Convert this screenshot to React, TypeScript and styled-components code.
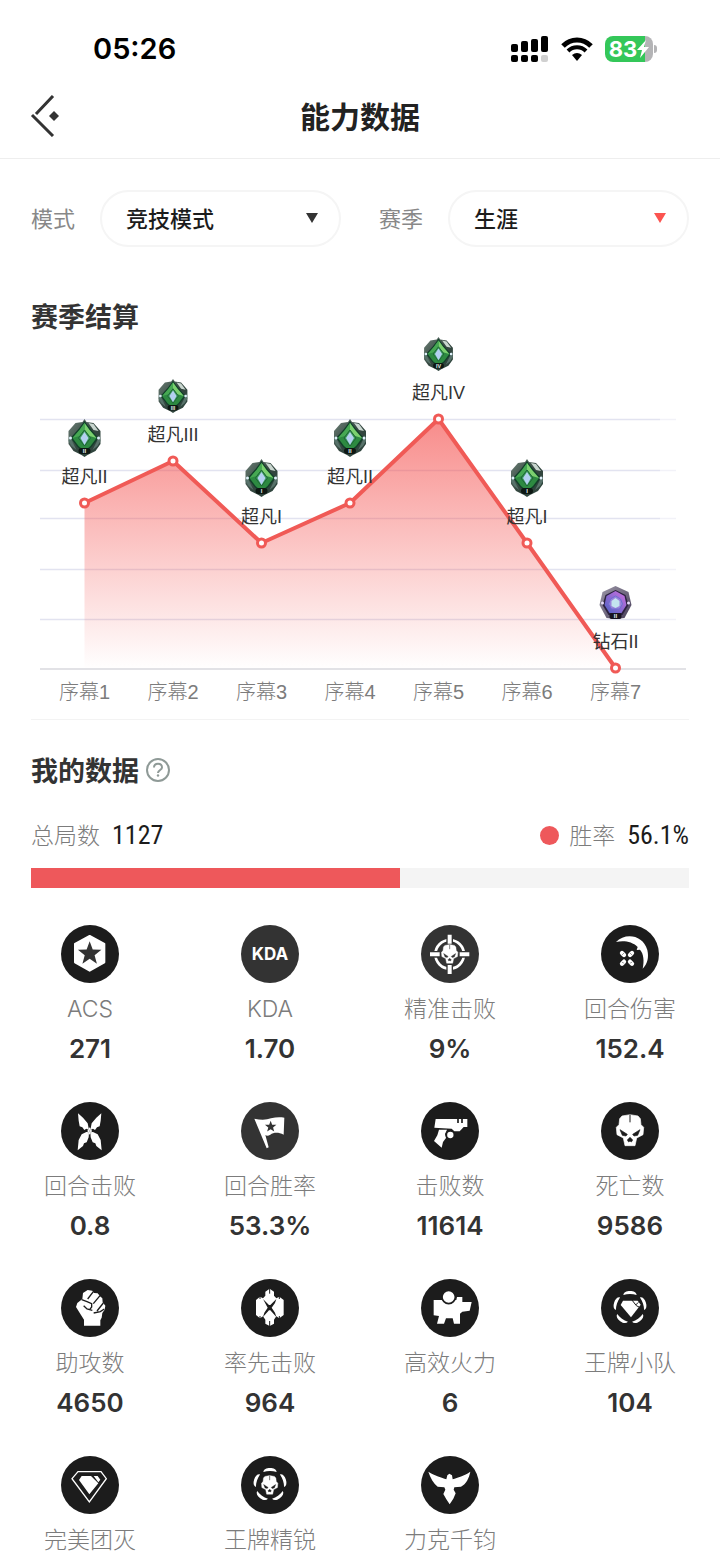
import React from "react";
import styled, { createGlobalStyle } from "styled-components";

const cjk = `"Noto Sans CJK SC", sans-serif`;
const ink = "#333333";
const muted = "#888888";
const mutedLight = "#7c7c7c";
const accent = "#ee585b";

const GlobalStyle = createGlobalStyle`
  * { box-sizing: border-box; }
  body {
    margin: 0;
    background: #ffffff;
    color: ${ink};
    font-family: "Liberation Sans", ${cjk};
  }
`;

const Page = styled.div`
  width: 100%;
`;

const StatusBar = styled.div`
  display: flex;
  align-items: center;
  justify-content: space-between;
  height: 74px;
  padding: 24px 63px 0 93px;
`;

const Clock = styled.time`
  font: 600 29px/50px Inter, sans-serif;
  color: #000000;
`;

const StatusIcons = styled.div`
  display: flex;
  align-items: center;
  gap: 12px;
`;

const Battery = styled.div`
  display: flex;
  align-items: center;
  gap: 1px;
`;

const BatteryCell = styled.div`
  display: flex;
  align-items: center;
  justify-content: center;
  width: 48px;
  height: 26px;
  border-radius: 8px;
  background: linear-gradient(90deg, #34c759 83%, #b4b4b6 83%);
  color: #ffffff;
  font: 700 22px/26px Inter, sans-serif;
`;

const BatteryTip = styled.span`
  width: 3px;
  height: 8px;
  border-radius: 0 3px 3px 0;
  background: #b4b4b6;
`;

const Header = styled.header`
  display: grid;
  grid-template-columns: 80px 1fr 80px;
  align-items: center;
  height: 85px;
  border-bottom: 1px solid #eeeeee;
`;

const BackButton = styled.button`
  display: flex;
  padding: 0 0 0 30px;
  border: 0;
  background: none;
`;

const PageTitle = styled.h1`
  margin: 0;
  padding-bottom: 2px;
  text-align: center;
  font: 700 30px/40px ${cjk};
  color: #222222;
`;

const Filters = styled.form`
  display: grid;
  grid-template-columns: 1fr 1fr;
  gap: 38px;
  padding: 31px 31px 0;
`;

const Filter = styled.div`
  display: flex;
  align-items: center;
  gap: 25px;
`;

const FilterLabel = styled.label`
  flex: none;
  padding-bottom: 3px;
  font: 400 22px/32px ${cjk};
  color: ${muted};
`;

const SelectBox = styled.div`
  position: relative;
  flex: 1;
`;

const Select = styled.select`
  display: block;
  width: 100%;
  height: 57px;
  padding: 0 48px 3px 24px;
  border: 2px solid #f5f5f5;
  border-radius: 29px;
  appearance: none;
  background: #ffffff;
  font: 500 22px/32px ${cjk};
  color: #1c1c1c;
`;

const Arrow = styled.svg<{ $color: string }>`
  position: absolute;
  top: 23px;
  right: 23px;
  fill: ${(p) => p.$color};
  pointer-events: none;
`;

const SectionTitle = styled.h2`
  margin: 0;
  padding-bottom: 2px;
  font: 700 27px/34px ${cjk};
  color: ${ink};
`;

const SeasonSection = styled.section`
  padding-top: 52px;
`;

const SectionHead = styled.div`
  display: flex;
  align-items: center;
  gap: 7px;
  padding: 0 31px;
`;

const Chart = styled.svg`
  display: block;
  width: 100%;
  height: auto;
  overflow: visible;
`;

const RankLabel = styled.text`
  font: 400 18px "Liberation Sans", ${cjk};
  text-anchor: middle;
  fill: ${ink};
`;

const ActLabel = styled.text`
  font: 300 20px "Liberation Sans", ${cjk};
  text-anchor: middle;
  fill: ${mutedLight};
`;

const Tier = styled.text`
  font: 700 6px "Liberation Sans", sans-serif;
  text-anchor: middle;
  fill: #e4f4ea;
`;

const Divider = styled.hr`
  height: 1px;
  margin: 11px 31px 33px;
  border: 0;
  background: #f3f3f3;
`;

const HelpButton = styled.button`
  display: flex;
  padding: 0 0 2px;
  border: 0;
  background: none;
`;

const Totals = styled.div`
  display: flex;
  justify-content: space-between;
  padding: 30px 31px 17px;
`;

const Total = styled.div`
  display: flex;
  align-items: center;
  height: 32px;
`;

const TotalLabel = styled.span`
  padding-bottom: 2px;
  font: 300 23px/30px ${cjk};
  color: ${mutedLight};
`;

const TotalValue = styled.span`
  margin-left: 12px;
  font: 400 26px/32px "Roboto Condensed", Roboto, sans-serif;
  color: #1c1c1c;
`;

const Dot = styled.span`
  width: 19px;
  height: 19px;
  margin-right: 10px;
  border-radius: 50%;
  background: ${accent};
`;

const Track = styled.div`
  height: 20px;
  margin: 0 31px;
  background: #f4f4f4;
`;

const Fill = styled.div`
  height: 100%;
  background: ${accent};
`;

const StatGrid = styled.ul`
  display: grid;
  grid-template-columns: repeat(4, 1fr);
  row-gap: 36px;
  margin: 0;
  padding: 37px 0 0;
  list-style: none;
`;

const Stat = styled.li`
  display: flex;
  flex-direction: column;
  align-items: center;
`;

const Disc = styled.div<{ $soft?: boolean }>`
  display: flex;
  align-items: center;
  justify-content: center;
  width: 58px;
  height: 58px;
  border-radius: 50%;
  background: ${(p) => (p.$soft ? "#333333" : "#1c1c1c")};
  color: #ffffff;
  font: 700 17px/20px Inter, sans-serif;
`;

const StatLabel = styled.span`
  margin-top: 10px;
  font: 300 23px/32px Inter, ${cjk};
  color: ${mutedLight};
`;

const StatValue = styled.strong`
  margin-top: 7px;
  font: 600 26px/34px Inter, sans-serif;
  color: ${ink};
`;

/* Icons are drawn on a 174-unit square that fills the disc. */
const DARK = "#1c1c1c";
const SOFT = "#333333";

const Art = ({ children }: { children: React.ReactNode }) => (
  <svg width="58" height="58" viewBox="0 0 174 174" fill="#fff" aria-hidden="true">
    {children}
  </svg>
);

const star = (cx: number, cy: number, r: number) =>
  Array.from({ length: 10 }, (_, i) => {
    const a = ((-90 + i * 36) * Math.PI) / 180;
    const d = i % 2 ? r * 0.42 : r;
    return `${cx + d * Math.cos(a)},${cy + d * Math.sin(a)}`;
  }).join(" ");

const Skull = ({ dark }: { dark: string }) => (
  <g>
    <path
      d="M63 42 L87 38 L111 42 L118 50 L120 68 L128 76 L126 98 L107 108 L102 131 H72 L67 108 L48 98 L46 76 L54 68 L56 50Z"
      stroke="#fff"
      strokeWidth="2"
      strokeLinejoin="round"
    />
    <path
      d="M57 83 L79 97 L75 102 L64 100Z M117 83 L95 97 L99 102 L110 100Z M87 106 L95 114 L91 120 L87 117 L83 120 L79 114Z"
      fill={dark}
      stroke={dark}
      strokeWidth="2"
    />
    <path d="M87 38V61" stroke={dark} strokeWidth="3" />
  </g>
);

const SmallSkull = ({ dark }: { dark: string }) => (
  <g transform="translate(86 87) scale(0.6) translate(-87 -85)">
    <Skull dark={dark} />
  </g>
);

/* Five crescents spaced evenly round the emblem. */
const FiveArcs = () => (
  <g>
    {[0, 72, 144, 216, 288].map((a) => (
      <path
        key={a}
        d="M67 48C68 40 76 36 87 36C98 36 106 40 107 48C94 44 80 44 67 48Z"
        transform={`rotate(${a} 87 86)`}
      />
    ))}
  </g>
);

const AcsIcon = () => (
  <Art>
    <path d="M86 33 L130 57 V112 L86 137 L42 112 V57Z" stroke="#fff" strokeWidth="6" strokeLinejoin="round" />
    <polygon points={star(86, 86, 37)} fill={SOFT} />
  </Art>
);

const PreciseIcon = () => (
  <Art>
    <circle cx="86" cy="88" r="43" fill="none" stroke="#fff" strokeWidth="8" />
    <g stroke={SOFT} strokeWidth="4">
      <path d="M78 27h16v31H78Z M78 118h16v31H78Z M25 80h33v16H25Z M114 80h33v16h-33Z" />
    </g>
    <SmallSkull dark={SOFT} />
  </Art>
);

const DamageIcon = () => (
  <Art>
    <path d="M45 51 C72 22 126 28 139 75 C144 97 140 116 125 131 C130 108 128 86 117 74 L107 75 L110 66 C93 49 68 46 45 51Z" />
    <path
      d="M63 84L69 90M93 84L87 90M63 116L69 110M93 116L87 110"
      stroke="#fff"
      strokeWidth="13"
      strokeLinecap="round"
    />
    <path d="M68 85L64 89M88 85L92 89M64 111L68 115M92 111L88 115" stroke={DARK} strokeWidth="2" />
  </Art>
);

const wing =
  "M51 34 L66 47 L80 64 L84 84 L76 80 L70 84 L64 76 L56 73 L53 56Z M50 145 L53 114 L62 97 L76 90 L84 91 L83 106 L77 121 L69 124 L66 132Z";

const RoundKillIcon = () => (
  <Art>
    <path d={wing} />
    <path d={wing} transform="translate(172 0) scale(-1 1)" />
    <path d="M86 76 L93 87 L86 98 L79 87Z" />
    <path d="M82 80L90 94M90 80L82 94" stroke="#777" strokeWidth="1" />
  </Art>
);

const FlagIcon = () => (
  <Art>
    <path d="M40 50 C60 54 75 54 90 49 C105 45 118 45 130 47 L128 98 C112 90 98 91 88 98 C82 102 76 102 73 99 L83 136 L77 139Z" />
    <polygon points={star(89, 74, 18)} fill={SOFT} />
  </Art>
);

const GunIcon = () => (
  <Art>
    <path d="M44 51H139V75H128L116 88H100L92 80L40 77Z" />
    <path d="M111 49V63M123 49V63" stroke={DARK} strokeWidth="5" />
    <path d="M54 83H78L72 96L75 108L66 120L62 137L39 117L49 100Z" />
    <circle cx="88" cy="99" r="12" stroke={DARK} strokeWidth="5" />
  </Art>
);

const SkullIcon = () => (
  <Art>
    <Skull dark={DARK} />
  </Art>
);

const FistIcon = () => (
  <Art>
    <path d="M69 140V122L60 108L45 84L49 72L64 60L66 42L80 33L94 35L99 42L110 43L117 52L124 58L125 70L133 80L131 92L124 102L122 116L118 124V140Z" />
    <path
      d="M97 38L80 60M117 50L97 74M127 72L108 96M62 62L78 68L92 74V84L86 92M68 80L78 90L94 94M98 102L118 98L130 90"
      fill="none"
      stroke={DARK}
      strokeWidth="4"
    />
  </Art>
);

const FirstKillIcon = () => (
  <Art>
    <path d="M45 63L57 53L66 58L73 50V38L86 29L99 38V50L106 58L115 53L128 63V108L115 118L106 112L99 122V134L86 141L73 134V122L66 112L57 118L45 108Z" />
    <path d="M66 60L84 78H88L106 60L102 72L92 86L102 101L106 114L88 94H84L66 114L70 101L80 86Z" fill={DARK} />
    <path d="M86 28V44M86 126V142M57 50V60M115 50V60M57 111V121M115 111V121" stroke={DARK} strokeWidth="3" />
  </Art>
);

const FirepowerIcon = () => (
  <Art>
    <path d="M38 63H106L108 54H124V69H152L146 95L124 98L117 104V134H99L95 118H75L69 134H48L54 111L38 109Z" />
    <circle cx="83" cy="54" r="20" stroke={DARK} strokeWidth="5" />
  </Art>
);

const AceSquadIcon = () => (
  <Art>
    <FiveArcs />
    <path d="M66 65H110L119 77L90 115L59 78Z" />
    <path d="M92 62L106 80L114 84M104 78L112 70" fill="none" stroke={DARK} strokeWidth="3" />
  </Art>
);

const WipeIcon = () => (
  <Art>
    <path d="M51 47H120L136 68L85 138L33 68Z" fill="none" stroke="#fff" strokeWidth="4" />
    <path d="M62 60H90L112 82L85 115L54 72Z M98 60H110L118 71L112 79Z" />
  </Art>
);

const AceEliteIcon = () => (
  <Art>
    <FiveArcs />
    <SmallSkull dark={DARK} />
  </Art>
);

const BirdIcon = () => (
  <Art>
    <path d="M22 47C42 60 62 64 76 70L79 58L85 53L93 58L95 70C110 64 130 60 148 47C144 66 136 84 120 92L100 94L98 101L104 112L97 128L86 145L76 130L67 114L73 101L70 94L50 92C38 82 28 66 22 47Z" />
  </Art>
);

const stats = [
  { label: "ACS", value: "271", icon: <AcsIcon /> },
  { label: "KDA", value: "1.70", icon: "KDA", soft: true },
  { label: "精准击败", value: "9%", icon: <PreciseIcon />, soft: true },
  { label: "回合伤害", value: "152.4", icon: <DamageIcon /> },
  { label: "回合击败", value: "0.8", icon: <RoundKillIcon /> },
  { label: "回合胜率", value: "53.3%", icon: <FlagIcon />, soft: true },
  { label: "击败数", value: "11614", icon: <GunIcon /> },
  { label: "死亡数", value: "9586", icon: <SkullIcon /> },
  { label: "助攻数", value: "4650", icon: <FistIcon /> },
  { label: "率先击败", value: "964", icon: <FirstKillIcon /> },
  { label: "高效火力", value: "6", icon: <FirepowerIcon /> },
  { label: "王牌小队", value: "104", icon: <AceSquadIcon /> },
  { label: "完美团灭", icon: <WipeIcon /> },
  { label: "王牌精锐", icon: <AceEliteIcon /> },
  { label: "力克千钧", icon: <BirdIcon /> },
];

const seasons = [
  { act: "序幕1", rank: "超凡", tier: "II", y: 168 },
  { act: "序幕2", rank: "超凡", tier: "III", y: 126, small: true },
  { act: "序幕3", rank: "超凡", tier: "I", y: 208 },
  { act: "序幕4", rank: "超凡", tier: "II", y: 168 },
  { act: "序幕5", rank: "超凡", tier: "IV", y: 84, small: true },
  { act: "序幕6", rank: "超凡", tier: "I", y: 208 },
  { act: "序幕7", rank: "钻石", tier: "II", y: 333 },
].map((s, i) => ({ ...s, x: 84.5 + i * 88.5 }));

const gridLines = [84, 135, 183, 234, 284];
const baseline = 334;

const AscendantBadge = ({ tier }: { tier: string }) => (
  <g>
    <path d="M0 -19L2 -16L9 -15L16 -7L16 6L11 13L3 17L0 19L-3 17L-11 13L-16 6L-16 -7L-9 -15L-2 -16Z" fill="url(#steel)" />
    <path d="M4 -15L9 -14L14 -7L9 -8Z" fill="#c9d6cf" />
    <path d="M-15 -3L-12 4L-8 12L-13 8L-16 3Z M15 -3L12 4L8 12L13 8L16 3Z" fill="#57726a" />
    <path d="M0 -17L6 -9L14 0L7 9L0 15L-7 9L-14 0L-6 -9Z" fill="#12402a" />
    <path d="M0 -15L5 -8L12 0L6 8L0 13L-6 8L-12 0L-5 -8Z" fill="#2d8a41" />
    <path d="M0 -15L5 -8L12 0L5 -2L0 -8Z" fill="#7bd06f" />
    <path d="M0 -15L-5 -8L-12 0L-5 -2L0 -8Z" fill="#46a853" />
    <path d="M0 -8L6 0L0 8L-6 0Z" fill="#3c9a5c" stroke="#1d6336" />
    <path d="M0 -6L4 0L0 7L-4 0Z" fill="#b4d0f0" />
    <circle cx="-14" cy="0" r="1.5" fill="#dff0fb" />
    <circle cx="14" cy="0" r="1.5" fill="#dff0fb" />
    <rect x="-6" y="10" width="12" height="6" rx="3" fill="#0d1713" />
    <Tier y="15">{tier}</Tier>
  </g>
);

const DiamondBadge = ({ tier }: { tier: string }) => (
  <g>
    <path d="M0 -17L13 -11L16 2L9 15L0 16L-9 15L-16 2L-13 -11Z" fill="url(#plum)" />
    <path d="M0 -13L10 -8L13 2L7 12H-7L-13 2L-10 -8Z" fill="#2b2140" />
    <path d="M0 -12L9 -7L11 2L6 10H-6L-11 2L-9 -7Z" fill="url(#amethyst)" />
    <path d="M0 -7L5 -4L7 1L4 6H-4L-7 1L-5 -4Z" fill="#9a83dc" stroke="#6e6fd0" />
    <path d="M0 -5L4 -2L4 3L0 5L-4 3L-4 -2Z" fill="#c3e4ef" />
    <circle cx="-13" cy="0" r="1.5" fill="#e6dcfb" />
    <circle cx="13" cy="0" r="1.5" fill="#e6dcfb" />
    <rect x="-6" y="10" width="12" height="6" rx="2" fill="#171320" />
    <Tier y="15">{tier}</Tier>
  </g>
);

const SeasonChart = () => {
  const line = seasons.map((s) => `${s.x},${s.y}`).join(" ");
  const last = seasons[seasons.length - 1];
  return (
    <Chart viewBox="0 0 720 373" role="img" aria-label="赛季结算">
      <defs>
        <linearGradient id="area" gradientUnits="userSpaceOnUse" x1="0" y1="84" x2="0" y2="334">
          <stop offset="0" stopColor="#f4504e" stopOpacity="0.66" />
          <stop offset="1" stopColor="#f4504e" stopOpacity="0" />
        </linearGradient>
        <linearGradient id="steel" x1="0" y1="0" x2="1" y2="1">
          <stop offset="0" stopColor="#6f8279" />
          <stop offset="0.5" stopColor="#34463f" />
          <stop offset="1" stopColor="#2c443c" />
        </linearGradient>
        <linearGradient id="plum" x1="0" y1="0" x2="1" y2="1">
          <stop offset="0" stopColor="#9d98a8" />
          <stop offset="1" stopColor="#463d58" />
        </linearGradient>
        <linearGradient id="amethyst" x1="0" y1="1" x2="1" y2="0">
          <stop offset="0" stopColor="#4e62c4" />
          <stop offset="1" stopColor="#d070e0" />
        </linearGradient>
      </defs>
      {gridLines.map((y) => (
        <g key={y} strokeWidth="1.5">
          <path d={`M40 ${y}.5H660`} stroke="#e2e3f0" />
          <path d={`M660 ${y}.5H676`} stroke="#f2f2f8" />
        </g>
      ))}
      <path d={`M40 ${baseline}H686`} stroke="#e2e2e6" strokeWidth="2" />
      <polygon points={`${seasons[0].x},${baseline} ${line} ${last.x},${baseline}`} fill="url(#area)" />
      <polyline points={line} fill="none" stroke="#f05a56" strokeWidth="4" strokeLinejoin="round" />
      {seasons.map((s) => (
        <g key={s.act}>
          <circle cx={s.x} cy={s.y} r="4" fill="#fff" stroke="#f05a56" strokeWidth="3" />
          <g transform={`translate(${s.x} ${s.y - 65}) scale(${s.small ? 0.9 : 1})`}>
            {s.rank === "钻石" ? <DiamondBadge tier={s.tier} /> : <AscendantBadge tier={s.tier} />}
          </g>
          <RankLabel x={s.x} y={s.y - 20}>
            {s.rank + s.tier}
          </RankLabel>
          <ActLabel x={s.x} y="364">
            {s.act}
          </ActLabel>
        </g>
      ))}
    </Chart>
  );
};

const SignalIcon = () => (
  <svg width="38" height="26" viewBox="0 0 38 26" aria-hidden="true">
    <rect x="0" y="8" width="7" height="8" rx="2" />
    <rect x="10" y="5" width="7" height="11" rx="2" />
    <rect x="20" y="3" width="7" height="13" rx="2" />
    <rect x="30" y="0" width="7" height="16" rx="2" />
    <rect x="0" y="19" width="7" height="7" rx="2" />
    <rect x="10" y="19" width="7" height="7" rx="2" />
    <rect x="20" y="19" width="7" height="7" rx="2" />
    <rect x="30" y="19" width="7" height="7" rx="2" fill="#d0d0d0" />
  </svg>
);

const WifiIcon = () => (
  <svg width="32" height="24" viewBox="0 0 32 24" aria-hidden="true">
    <path d="M2 9C10 1 22 1 30 9" fill="none" stroke="#000" strokeWidth="5" />
    <path d="M7 14C12 9 20 9 25 14" fill="none" stroke="#000" strokeWidth="4" />
    <path d="M11 18Q16 14 21 18L16 24Z" />
  </svg>
);

const modes = ["竞技模式"];
const ranges = ["生涯"];
const winRate = 56.1;

export default function App() {
  return (
    <Page>
      <GlobalStyle />
      <StatusBar>
        <Clock>05:26</Clock>
        <StatusIcons>
          <SignalIcon />
          <WifiIcon />
          <Battery>
            <BatteryCell>
              83
              <svg width="12" height="18" viewBox="0 0 12 18" fill="#fff" aria-hidden="true">
                <path d="M9 0L0 10H5L3 18L12 7H7Z" />
              </svg>
            </BatteryCell>
            <BatteryTip />
          </Battery>
        </StatusIcons>
      </StatusBar>
      <Header>
        <BackButton type="button" aria-label="返回">
          <svg width="30" height="42" viewBox="0 0 30 42" aria-hidden="true">
            <path d="M23 1L6 19M2 20L23 41" fill="none" stroke={ink} strokeWidth="3" />
            <path d="M24 16L29 21L24 26L19 21Z" fill={ink} />
          </svg>
        </BackButton>
        <PageTitle>能力数据</PageTitle>
      </Header>
      <main>
        <Filters>
          <Filter>
            <FilterLabel htmlFor="mode">模式</FilterLabel>
            <SelectBox>
              <Select id="mode">
                {modes.map((m) => (
                  <option key={m}>{m}</option>
                ))}
              </Select>
              <Arrow $color="#333333" width="12" height="10" viewBox="0 0 12 10">
                <path d="M0 0H12L6 10Z" />
              </Arrow>
            </SelectBox>
          </Filter>
          <Filter>
            <FilterLabel htmlFor="season">赛季</FilterLabel>
            <SelectBox>
              <Select id="season">
                {ranges.map((r) => (
                  <option key={r}>{r}</option>
                ))}
              </Select>
              <Arrow $color="#fb5450" width="12" height="10" viewBox="0 0 12 10">
                <path d="M0 0H12L6 10Z" />
              </Arrow>
            </SelectBox>
          </Filter>
        </Filters>
        <SeasonSection>
          <SectionHead>
            <SectionTitle>赛季结算</SectionTitle>
          </SectionHead>
          <SeasonChart />
        </SeasonSection>
        <Divider />
        <section>
          <SectionHead>
            <SectionTitle>我的数据</SectionTitle>
            <HelpButton type="button" aria-label="说明">
              <svg width="24" height="24" viewBox="0 0 24 24" fill="none" stroke="#8f9a97" strokeWidth="2" aria-hidden="true">
                <circle cx="12" cy="12" r="11" />
                <path d="M8 9.500C8 4.500 16 4.500 16 9.500C16 12 12 12 12 15" />
                <circle cx="12" cy="17.500" r="1.200" fill="#8f9a97" stroke="none" />
              </svg>
            </HelpButton>
          </SectionHead>
          <Totals>
            <Total>
              <TotalLabel>总局数</TotalLabel>
              <TotalValue>1127</TotalValue>
            </Total>
            <Total>
              <Dot />
              <TotalLabel>胜率</TotalLabel>
              <TotalValue>{winRate}%</TotalValue>
            </Total>
          </Totals>
          <Track>
            <Fill style={{ width: `${winRate}%` }} />
          </Track>
          <StatGrid>
            {stats.map((s) => (
              <Stat key={s.label}>
                <Disc $soft={s.soft}>{s.icon}</Disc>
                <StatLabel>{s.label}</StatLabel>
                {s.value && <StatValue>{s.value}</StatValue>}
              </Stat>
            ))}
          </StatGrid>
        </section>
      </main>
    </Page>
  );
}
